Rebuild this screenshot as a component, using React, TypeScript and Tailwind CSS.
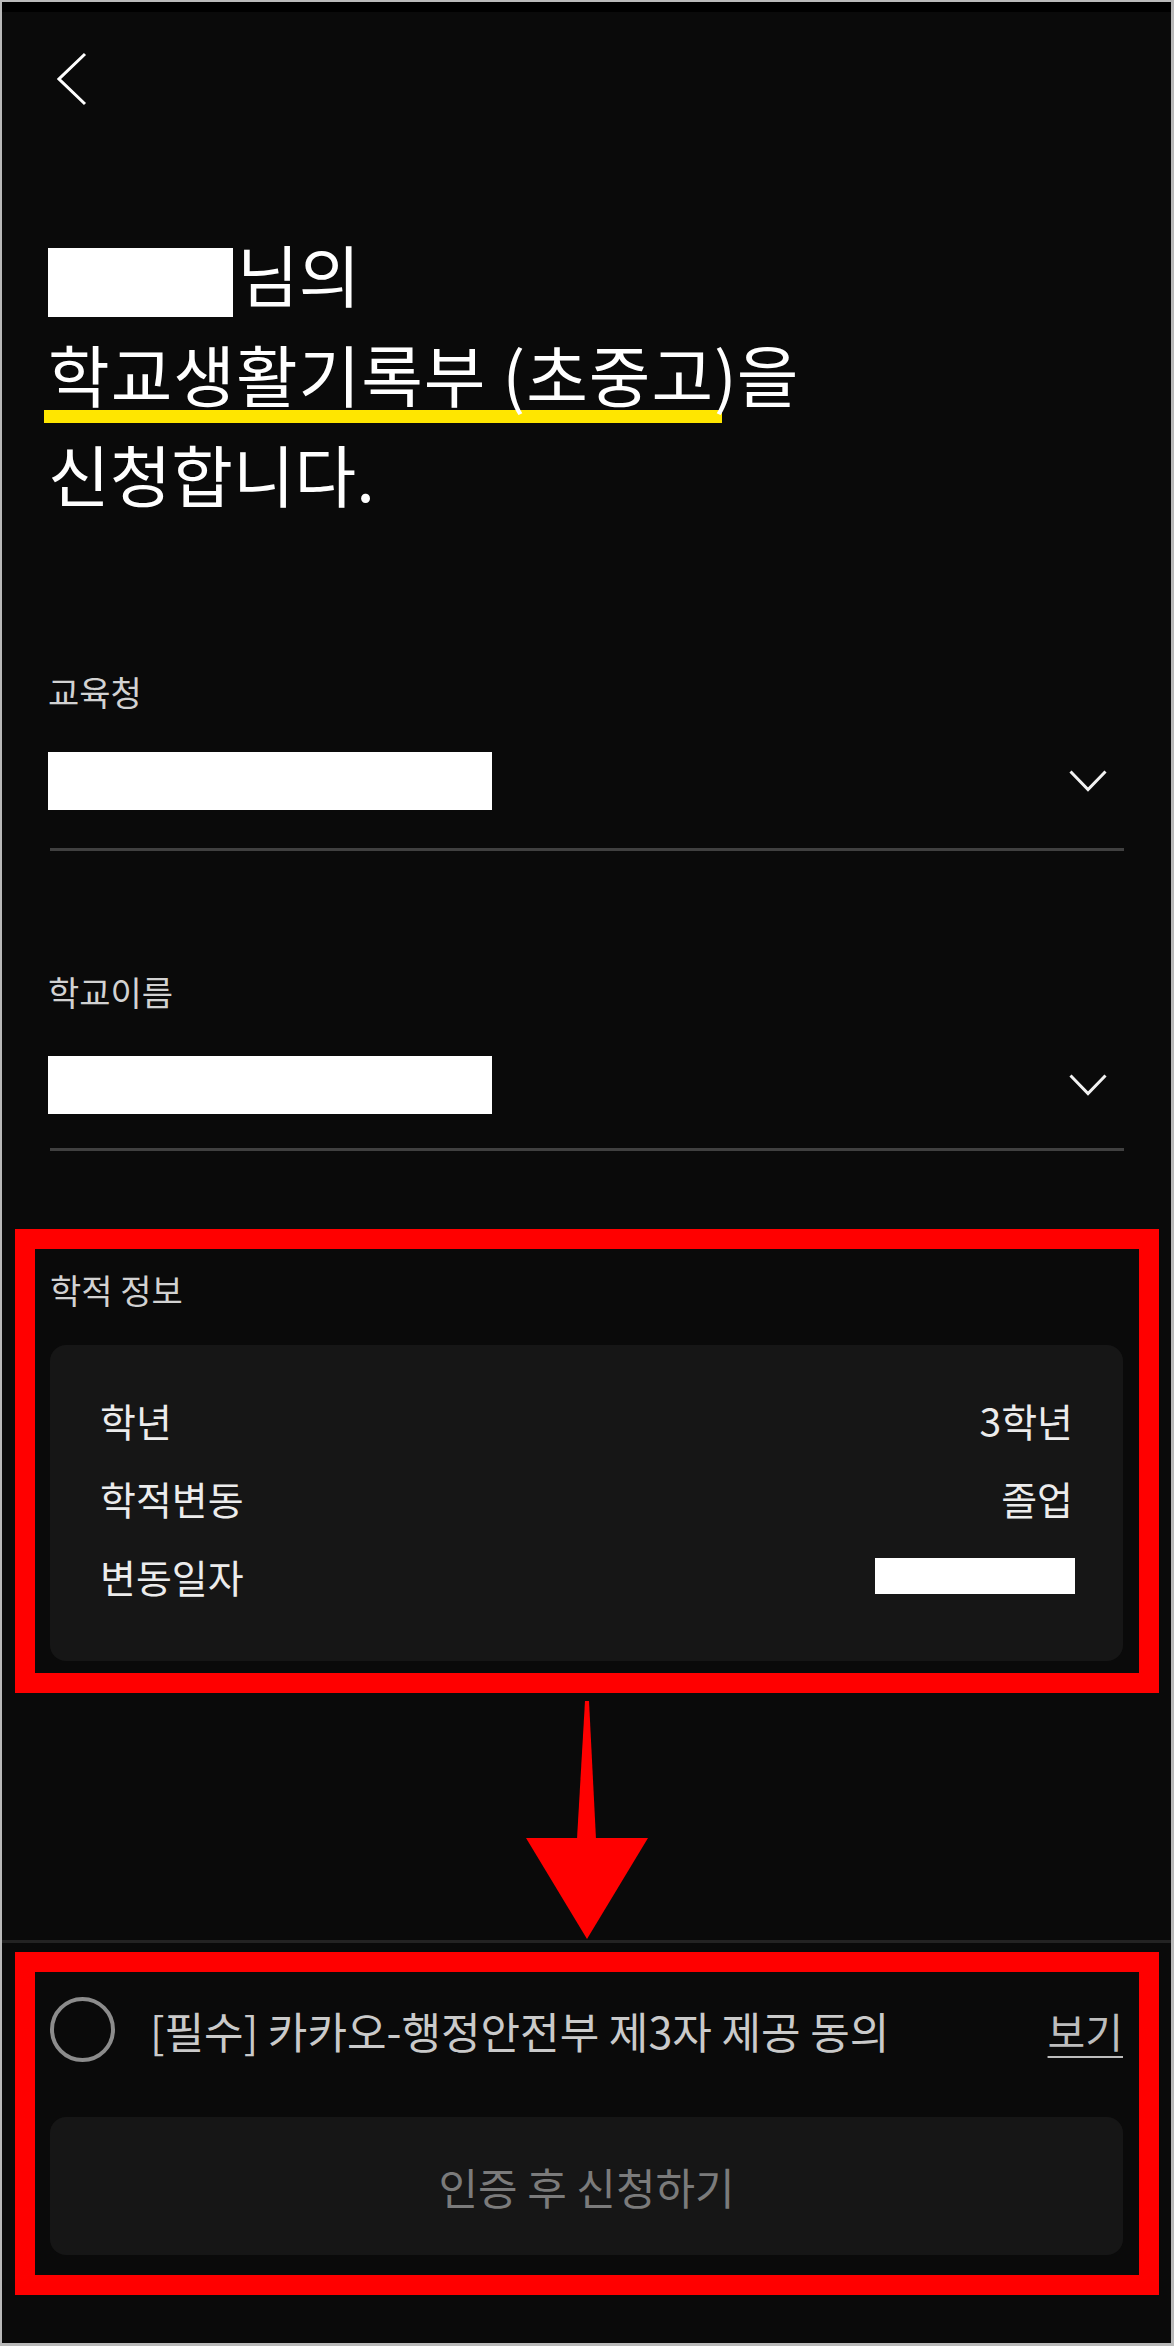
import React from 'react';

function ChevronDown() {
  return (
    <svg width="38" height="22" viewBox="0 0 38 22" fill="none" stroke="#f2f2f2" strokeWidth="3" className="mr-[17px] shrink-0">
      <polyline points="1.5,1.5 19,19.5 36.5,1.5" />
    </svg>
  );
}

function Field({ label, top, rowTop, dividerTop }: { label: string; top: string; rowTop: string; dividerTop: string }) {
  return (
    <div>
      <div className={`${top} text-[34px] leading-[40px] text-[#d2d2d2]`}>{label}</div>
      <div className={`${rowTop} h-[58px] flex items-center justify-between`}>
        <div className="w-[444px] h-[58px] bg-white" />
        <ChevronDown />
      </div>
      <div className={`${dividerTop} h-[3px] bg-[#404040] ml-[2px]`} />
    </div>
  );
}

const rows = [
  { k: '학년', v: '3학년' },
  { k: '학적변동', v: '졸업' },
  { k: '변동일자', v: null },
];

export default function App() {
  return (
    <div className="w-[1174px] h-[2346px] border-[#b9b9b9] border-t-2 border-l-2 border-r-[3px] border-b-[3px] bg-[#0a0a0a] flex flex-col font-['Noto_Sans_CJK_KR',sans-serif] text-white overflow-hidden">
      <div className="h-[10px] bg-black shrink-0" />

      {/* header */}
      <div className="pl-[55px] pt-[40px] shrink-0">
        <svg width="30" height="54" viewBox="0 0 30 54" fill="none" stroke="#ffffff" strokeWidth="3">
          <polyline points="28,2 2,27 28,52" />
        </svg>
      </div>

      <h1 className="mt-[117px] pl-[46px] text-[67px] leading-[100px] font-normal text-white shrink-0">
        <span className="inline-block w-[185px] h-[69px] bg-white align-[-15px] mr-[4px]" />
        님의
        <br />
        <span className="relative">
          <span className="absolute left-[-4px] right-[-8px] top-[86px] h-[13px] bg-[#ffe600]" />
          <span className="relative tracking-[1px]">학교생활기록부 (초중고</span>
        </span>
        <span className="relative">)을</span>
        <br />
        신청합니다.
      </h1>

      <div className="pl-[46px] pr-[47px] shrink-0">
        <Field label="교육청" top="mt-[149px]" rowTop="mt-[40px]" dividerTop="mt-[38px]" />
        <Field label="학교이름" top="mt-[121px]" rowTop="mt-[44px]" dividerTop="mt-[34px]" />
      </div>

      {/* 학적 정보 */}
      <div className="mt-[78px] ml-[13px] mr-[12px] border-[20px] border-[#ff0000] pt-[21px] pl-[15px] pr-[16px] pb-[12px] shrink-0">
        <div className="text-[34px] leading-[40px] text-[#d2d2d2]">학적 정보</div>
        <div className="mt-[35px] rounded-[16px] bg-[#161616] pt-[51px] pb-[61px] px-[50px] flex flex-col gap-[30px]">
          {rows.map(r => (
            <div key={r.k} className="flex items-center justify-between h-[48px] text-[39px] leading-[48px] text-[#ececec]">
              <span>{r.k}</span>
              {r.v ? <span>{r.v}</span> : <span className="w-[200px] h-[36px] bg-white mr-[-2px]" />}
            </div>
          ))}
        </div>
      </div>

      {/* arrow */}
      <div className="h-[247px] flex justify-center pt-[8px] shrink-0">
        <svg width="122" height="238" viewBox="0 0 122 238">
          <polygon points="59,0 63,0 70,138 51,138" fill="#ff0000" />
          <polygon points="0,137 122,137 61,238" fill="#ff0000" />
        </svg>
      </div>

      <div className="h-[3px] bg-[#232323] shrink-0" />

      {/* agreement + button */}
      <div className="mt-[9px] ml-[13px] mr-[12px] border-[20px] border-[#ff0000] pt-[25px] pl-[15px] pr-[16px] pb-[20px] shrink-0">
        <div className="flex items-center h-[65px]">
          <div className="w-[65px] h-[65px] rounded-full border-4 border-[#8c8c8c] shrink-0" />
          <span className="ml-[35px] text-[43px] leading-[52px] text-[#cacaca] whitespace-nowrap">[필수] 카카오-행정안전부 제3자 제공 동의</span>
          <span className="ml-auto text-[41px] leading-[52px] text-[#bdbdbd] underline decoration-2 underline-offset-[8px]">보기</span>
        </div>
        <button className="mt-[55px] w-full h-[138px] rounded-[16px] bg-[#161616] flex items-center justify-center text-[43px] text-[#7b7b7b]">
          인증 후 신청하기
        </button>
      </div>

      <div className="flex-1" />
    </div>
  );
}
